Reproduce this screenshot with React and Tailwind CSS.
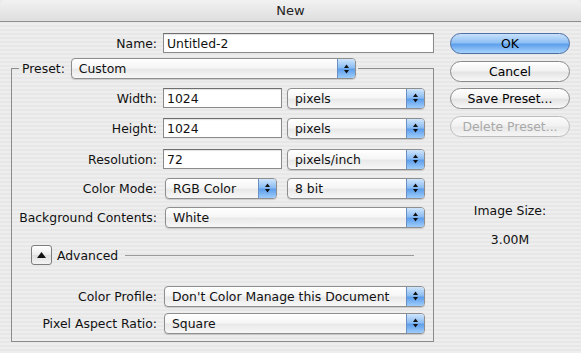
import React from "react";

const Arrows = () => (
  <svg width="7" height="12" viewBox="0 0 7 12">
    <polygon points="3.5,1.5 6,5 1,5" fill="#111" />
    <polygon points="1,7 6,7 3.5,10.5" fill="#111" />
  </svg>
);

const Popup = ({ text, className = "" }) => (
  <div
    className={`flex h-[21px] items-stretch overflow-hidden rounded-[4px] border border-[#8e8e8e] bg-[linear-gradient(#ffffff,#f6f6f6_45%,#e9e9e9_55%,#f7f7f7)] shadow-[0_1px_1px_rgba(0,0,0,0.15)] ${className}`}
  >
    <span className="flex flex-1 items-center pl-[7px] whitespace-nowrap">{text}</span>
    <span className="flex w-[18px] items-center justify-center border-l border-[#6a8fc4] bg-[linear-gradient(#cfe5fb,#8cbdf3_45%,#5f9fec_55%,#9fcdfb)]">
      <Arrows />
    </span>
  </div>
);

const Field = ({ value, className = "" }) => (
  <div
    className={`flex h-[20px] items-center border border-[#8a8a8a] border-t-[#6e6e6e] bg-white pl-[3px] shadow-[inset_0_1px_1px_rgba(0,0,0,0.12)] ${className}`}
  >
    {value}
  </div>
);

const Button = ({ children, kind = "normal" }) => {
  const styles = {
    normal:
      "border-[#8a8a8a] bg-[linear-gradient(#ffffff,#f3f3f3_45%,#e4e4e4_55%,#f8f8f8)] text-black",
    primary:
      "border-[#4e6fa3] bg-[linear-gradient(#c9e1fb,#8fc0f4_45%,#5fa0ec_55%,#a6d3fc)] text-black",
    disabled:
      "border-[#bdbdbd] bg-[linear-gradient(#fbfbfb,#f2f2f2_45%,#e9e9e9_55%,#f5f5f5)] text-[#a9a9a9]",
  };
  return (
    <div
      className={`flex h-[21px] w-[120px] items-center justify-center rounded-full border ${styles[kind]}`}
    >
      {children}
    </div>
  );
};

const Row = ({ label, children, className = "" }) => (
  <div className={`flex h-[20px] items-center ${className}`}>
    <div className="w-[145px] text-right whitespace-nowrap">{label}</div>
    <div className="ml-[6px] flex items-center">{children}</div>
  </div>
);

export default function App() {
  return (
    <div className="flex h-[353px] w-[581px] flex-col overflow-hidden bg-[repeating-linear-gradient(0deg,#eeeeee_0px,#eeeeee_2px,#e7e7e7_2px,#e7e7e7_4px)] font-['DejaVu_Sans',sans-serif] text-[12.4px] leading-[15px] text-[#111]">
      {/* title bar */}
      <div className="flex h-[22px] shrink-0 items-center justify-center rounded-t-[5px] border-b border-[#8f8f8f] bg-[linear-gradient(#f2f2f2,#dedede)] text-[13px] text-[#222]">
        New
      </div>

      <div className="flex pl-[11px]">
        {/* left column */}
        <div className="flex w-[423px] flex-col">
          <div className="mt-[11px] flex h-[20px] items-center">
            <div className="w-[146px] text-right">Name:</div>
            <Field value="Untitled-2" className="ml-[6px] w-[271px]" />
          </div>

          <fieldset className="mt-[5px] w-[423px] border border-[#8c8c8c] px-0 pb-[8px]">
            <legend className="ml-[7px] flex items-center pl-[3px] pr-[2px]">
              <span>Preset:</span>
              <Popup text="Custom" className="ml-[6px] w-[285px]" />
            </legend>

            <Row label="Width:" className="mt-[9px]">
              <Field value="1024" className="w-[119px]" />
              <Popup text="pixels" className="ml-[5px] w-[138px]" />
            </Row>
            <Row label="Height:" className="mt-[10px]">
              <Field value="1024" className="w-[119px]" />
              <Popup text="pixels" className="ml-[5px] w-[138px]" />
            </Row>
            <Row label="Resolution:" className="mt-[11px]">
              <Field value="72" className="w-[119px]" />
              <Popup text="pixels/inch" className="ml-[5px] w-[138px]" />
            </Row>
            <Row label="Color Mode:" className="mt-[9px]">
              <Popup text="RGB Color" className="ml-[2px] w-[112px]" />
              <Popup text="8 bit" className="ml-[10px] w-[138px]" />
            </Row>
            <Row label="Background Contents:" className="mt-[9px]">
              <Popup text="White" className="ml-[2px] w-[260px]" />
            </Row>

            <div className="mt-[18px] flex h-[20px] items-center pl-[19px] pr-[19px]">
              <div className="flex h-[20px] w-[21px] items-center justify-center rounded-[3px] border border-[#7d7d7d] bg-[linear-gradient(#ffffff,#ececec_50%,#dedede_51%,#f4f4f4)]">
                <svg width="9" height="6" viewBox="0 0 9 6">
                  <polygon points="4.5,0 9,6 0,6" fill="#111" />
                </svg>
              </div>
              <span className="ml-[5px]">Advanced</span>
              <div className="ml-[7px] h-px flex-1 bg-[#9a9a9a]" />
            </div>

            <Row label="Color Profile:" className="mt-[21px]">
              <Popup text="Don't Color Manage this Document" className="ml-[1px] w-[261px]" />
            </Row>
            <Row label="Pixel Aspect Ratio:" className="mt-[7px]">
              <Popup text="Square" className="ml-[1px] w-[261px]" />
            </Row>
          </fieldset>
        </div>

        {/* right column */}
        <div className="ml-[16px] flex w-[120px] flex-col items-center">
          <div className="mt-[11px]">
            <Button kind="primary">OK</Button>
          </div>
          <div className="mt-[7px]">
            <Button>Cancel</Button>
          </div>
          <div className="mt-[6px]">
            <Button>Save Preset...</Button>
          </div>
          <div className="mt-[7px]">
            <Button kind="disabled">Delete Preset...</Button>
          </div>
          <div className="mt-[66px]">Image Size:</div>
          <div className="mt-[14px]">3.00M</div>
        </div>
      </div>
    </div>
  );
}
